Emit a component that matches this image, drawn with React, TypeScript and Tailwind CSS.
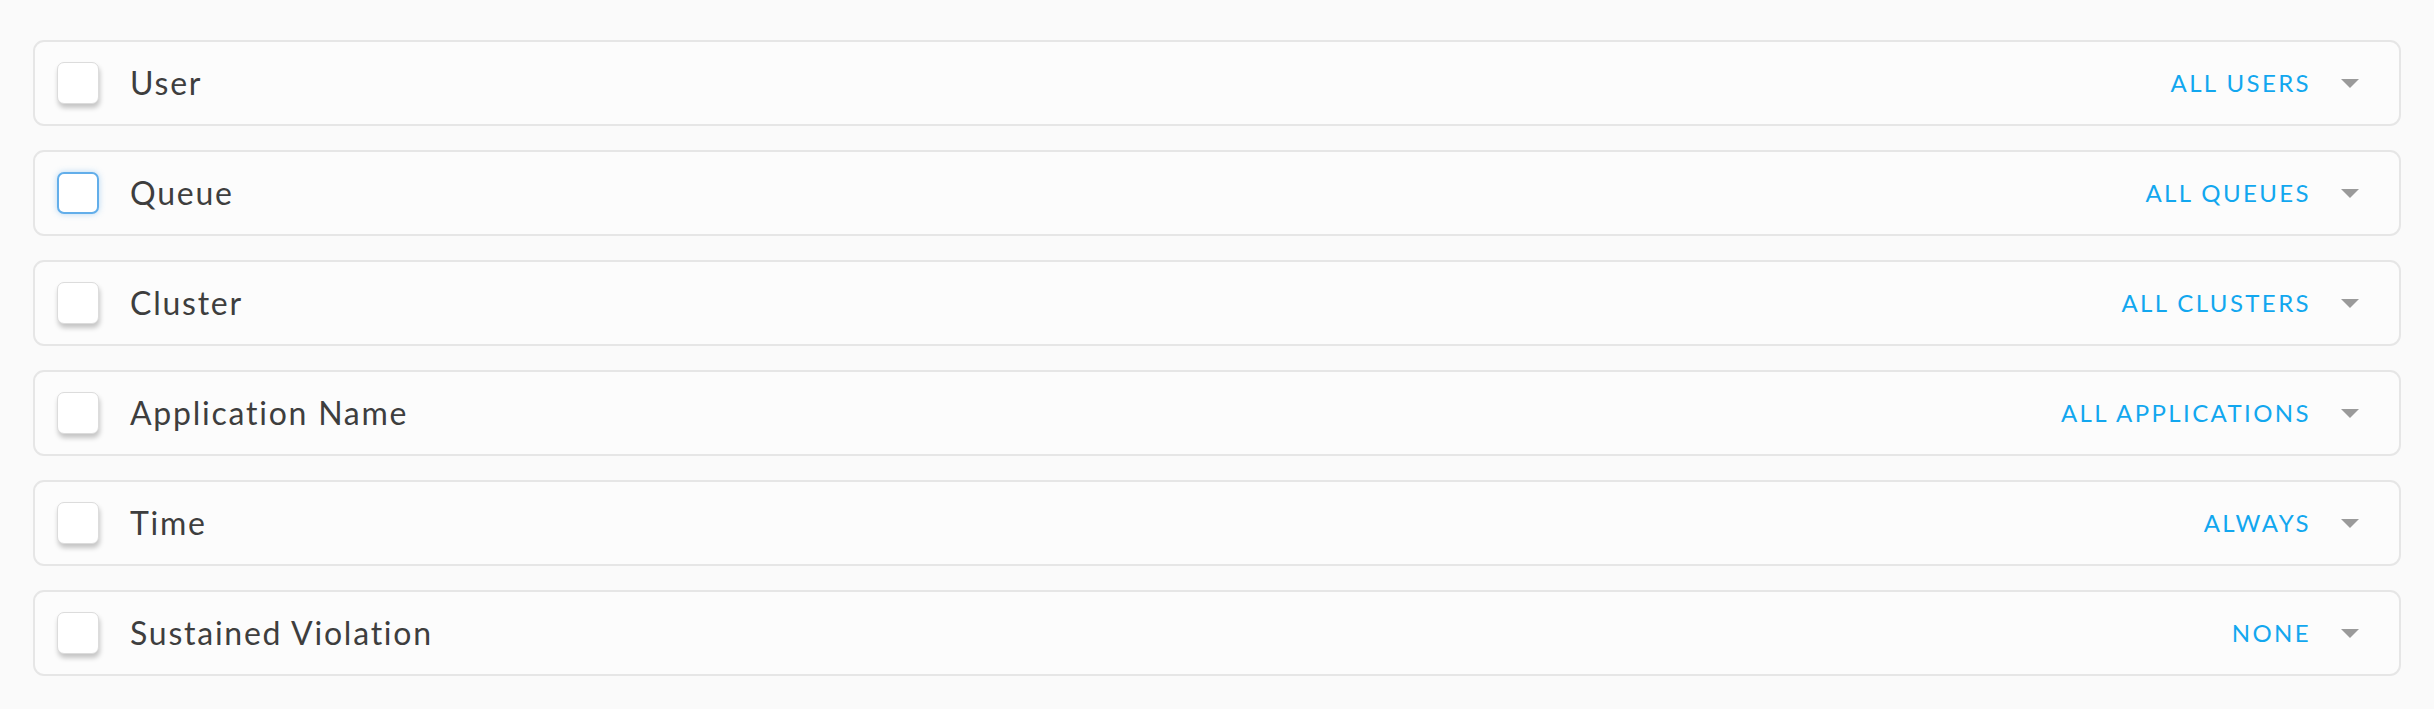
const rows = [
  { label: "User", value: "ALL USERS" },
  { label: "Queue", value: "ALL QUEUES", focused: true },
  { label: "Cluster", value: "ALL CLUSTERS" },
  { label: "Application Name", value: "ALL APPLICATIONS" },
  { label: "Time", value: "ALWAYS" },
  { label: "Sustained Violation", value: "NONE" },
];

function Checkbox({ focused }: { focused?: boolean }) {
  return (
    <span
      className={
        focused
          ? "block h-[42px] w-[42px] shrink-0 rounded-[7px] border-2 border-[#62aeea] bg-white shadow-[0_0_6px_rgba(98,174,234,0.45)]"
          : "block h-[42px] w-[42px] shrink-0 rounded-[7px] border border-[#dcdcdc] bg-white shadow-[1px_4px_5px_rgba(0,0,0,0.22)]"
      }
    />
  );
}

export default function App() {
  return (
    <div className="min-h-[709px] bg-[#fafafa] px-[33px] pt-[40px] font-['Lato','Open_Sans',sans-serif]">
      <div className="flex flex-col gap-[24px]">
        {rows.map((row) => (
          <div
            key={row.label}
            className="flex h-[86px] items-center rounded-[11px] border-2 border-[#e6e6e6] bg-[#fcfcfc] pl-[22px] pr-[40px]"
          >
            <Checkbox focused={row.focused} />
            <span className="ml-[31px] text-[32px] tracking-[0.055em] text-[#3e3e3e]">{row.label}</span>
            <span className="ml-auto text-[24px] tracking-[0.1em] text-[#12a7ef]">{row.value}</span>
            <svg className="ml-[30px]" width="18" height="9" viewBox="0 0 18 9">
              <path d="M0 0 H18 L9 9 Z" fill="#9a9a9a" />
            </svg>
          </div>
        ))}
      </div>
    </div>
  );
}
